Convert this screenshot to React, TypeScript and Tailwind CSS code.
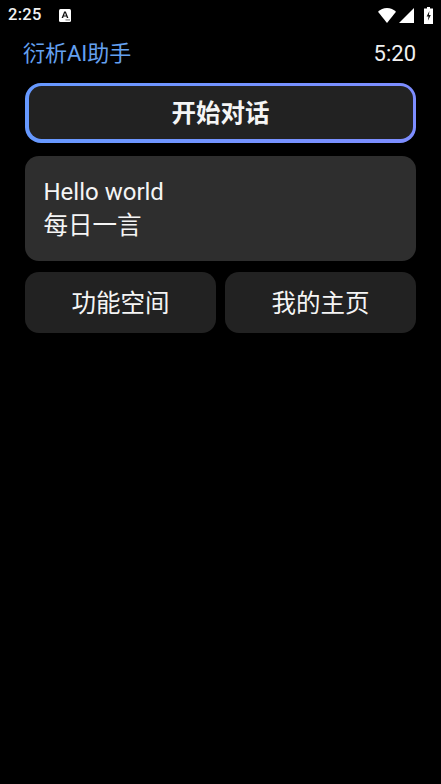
import { ReactNode } from "react";

const FONT = "font-['Roboto','Noto_Sans_CJK_SC',sans-serif]";

function StatusBar() {
  return (
    <div className="flex h-[30px] items-center justify-between pl-2 pr-2">
      <div className="flex items-center gap-[17px] pt-[1px]">
        <span className="text-[16.5px] leading-none font-medium tracking-[0.3px] text-[#f2f2f2]">2:25</span>
        <svg width="12" height="13" viewBox="0 0 12 13">
          <rect x="0" y="0" width="12" height="13" rx="1.5" fill="#fff" />
          <path d="M2.6 9 5.2 2.5h1.6L9.4 9H7.9l-.5-1.4H4.6L4.1 9zM5 6.4h2L6 3.8z" fill="#111" />
          <rect x="6.5" y="10.2" width="4.5" height="1.4" fill="#999" />
        </svg>
      </div>
      <div className="flex items-center">
        <svg width="18" height="15" viewBox="0 0 18 15" className="mr-[3px]">
          <path d="M0 3.8C2.3 1.5 5.5 0 9 0s6.7 1.5 9 3.8L9 15z" fill="#fff" />
        </svg>
        <svg width="15" height="15" viewBox="0 0 15 15" className="mr-[10px]">
          <path d="M15 0v15H0z" fill="#fff" />
        </svg>
        <svg width="9" height="17" viewBox="0 0 9 17">
          <path d="M3 0h3v1.5h3V17H0V1.5h3z" fill="#fff" />
          <path d="M5.4 4 2.6 9.6h1.9l-.6 4.2 2.9-5.9H4.9z" fill="#111" />
        </svg>
      </div>
    </div>
  );
}

function Tile({ children }: { children: ReactNode }) {
  return (
    <div className="flex h-[61px] flex-1 items-center justify-center rounded-[14px] bg-[#222222] pt-[4px] text-[24.5px] text-[#f5f5f5]">
      {children}
    </div>
  );
}

export default function App() {
  return (
    <div className={`${FONT} h-[784px] w-[441px] overflow-hidden bg-black`}>
      <StatusBar />
      <div className="flex items-center justify-between pt-2 pr-[25px] pl-[23px]">
        <span className="text-[22px] leading-[32px] text-[#64a0f0]">衍析AI助手</span>
        <span className="text-[22px] leading-[32px] text-[#f0f0f0]">5:20</span>
      </div>
      <div className="flex flex-col px-[25px] pt-[12.5px]">
        <div className="mb-[13.5px] rounded-[16px] bg-gradient-to-r from-[#6699ff] to-[#7d8dff] p-[3.5px]">
          <div className="flex h-[53px] items-center justify-center rounded-[12.5px] bg-[#222222] pt-[3px] text-[24.5px] font-bold text-[#f5f5f5]">
            开始对话
          </div>
        </div>
        <div className="mb-[11px] flex h-[105px] flex-col justify-center rounded-[14px] bg-[#2e2e2e] px-[18.5px] text-[24.5px] leading-[34px] text-[#f5f5f5]">
          <span className="text-[24px]">Hello world</span>
          <span>每日一言</span>
        </div>
        <div className="flex gap-[9px]">
          <Tile>功能空间</Tile>
          <Tile>我的主页</Tile>
        </div>
      </div>
    </div>
  );
}
